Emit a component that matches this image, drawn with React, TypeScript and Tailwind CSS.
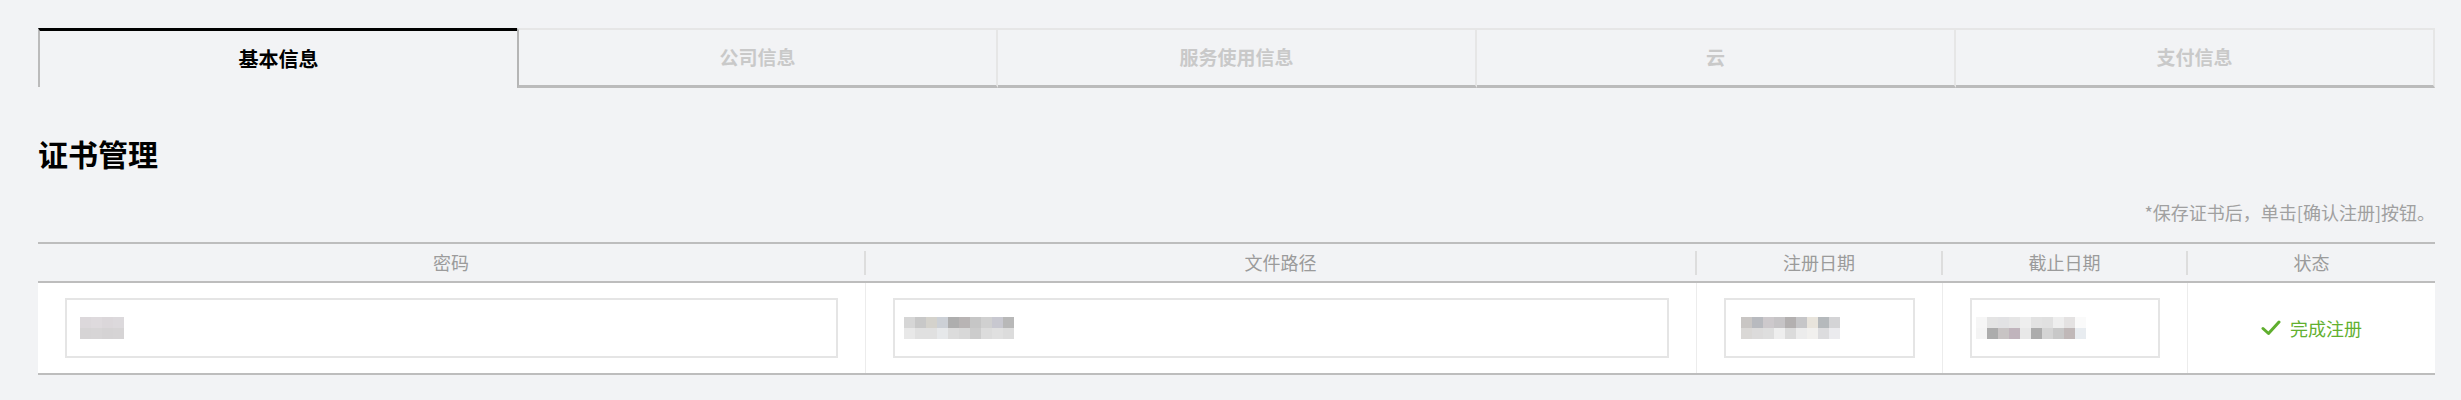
import React from 'react';

const font = "font-['Noto_Sans_CJK_SC','Noto_Sans',sans-serif]";

const tabs = ['基本信息', '公司信息', '服务使用信息', '云', '支付信息'];

const columns = [
  { title: '密码', width: 'w-[828px]' },
  { title: '文件路径', width: 'w-[831px]' },
  { title: '注册日期', width: 'w-[246px]' },
  { title: '截止日期', width: 'w-[245px]' },
  { title: '状态', width: 'w-[247px]' },
];

// blurred values, two rows of 11px cells
const pixPassword = [
  ['bg-[#dcd8db]', 'bg-[#dedadd]', 'bg-[#dbd7da]', 'bg-[#dcd9dc]'],
  ['bg-[#d6d4d5]', 'bg-[#d7d5d6]', 'bg-[#d5d3d4]', 'bg-[#d6d4d5]'],
];
const pixPath = [
  ['bg-[#d6d6d6]', 'bg-[#c8c8c8]', 'bg-[#d4d2cc]', 'bg-[#ccd0d6]', 'bg-[#aeaeae]', 'bg-[#b8b4b4]', 'bg-[#c6c6c6]', 'bg-[#d0d0d0]', 'bg-[#c8c8d0]', 'bg-[#b8b8b8]'],
  ['bg-[#e8e8e8]', 'bg-[#e0e0e0]', 'bg-[#e0e0e0]', 'bg-[#e6e8ea]', 'bg-[#dcdcdc]', 'bg-[#d8d8d8]', 'bg-[#cccccc]', 'bg-[#dcdcdc]', 'bg-[#e0e0e0]', 'bg-[#dcdcdc]'],
];
const pixRegDate = [
  ['bg-[#c9c6c4]', 'bg-[#b8babf]', 'bg-[#cdc9cc]', 'bg-[#c6c4c6]', 'bg-[#b3b0b0]', 'bg-[#c6c6c8]', 'bg-[#e8e4dc]', 'bg-[#b5b9bc]', 'bg-[#d4d4d6]'],
  ['bg-[#dad8d6]', 'bg-[#dcdbdb]', 'bg-[#dedede]', 'bg-[#eeeeee]', 'bg-[#dbdbdb]', 'bg-[#ececec]', 'bg-[#f1f0ee]', 'bg-[#dcdcde]', 'bg-[#ebebee]'],
];
const pixEndDate = [
  ['bg-[#f6f6f6]', 'bg-[#e4e4e4]', 'bg-[#e2e2e4]', 'bg-[#e6e6e6]', 'bg-[#eeeeee]', 'bg-[#e2e2e2]', 'bg-[#e0e0e0]', 'bg-[#eeeeee]', 'bg-[#e4e2e2]', 'bg-[#fafafa]'],
  ['bg-[#f4f4f4]', 'bg-[#acacac]', 'bg-[#c8c4c4]', 'bg-[#c0b4bc]', 'bg-[#e8e8e8]', 'bg-[#acacac]', 'bg-[#d4d4d4]', 'bg-[#c8c8c8]', 'bg-[#c0b8b8]', 'bg-[#e8ecf0]'],
];

function Mosaic({ rows }: { rows: string[][] }) {
  return (
    <div className="flex flex-col">
      {rows.map((row, i) => (
        <div key={i} className="flex">
          {row.map((c, j) => (
            <div key={j} className={`w-[11px] h-[11px] ${c}`} />
          ))}
        </div>
      ))}
    </div>
  );
}

function FieldBox({ rows, pad }: { rows: string[][]; pad: string }) {
  return (
    <div className={`h-[60px] w-full bg-white border-2 border-[#e5e5e5] flex items-center ${pad}`}>
      <Mosaic rows={rows} />
    </div>
  );
}

export default function App() {
  return (
    <div className={`w-full h-[400px] bg-[#f2f3f5] pl-[38px] pr-[26px] pt-[28px] ${font}`}>
      <div className="flex h-[60px]">
        {tabs.map((tab, i) =>
          i === 0 ? (
            <div
              key={tab}
              className="flex-1 h-[59px] border-t-[3px] border-t-black border-l-2 border-l-[#bbbbbb] flex items-center justify-center text-[20px] font-bold text-black"
            >
              {tab}
            </div>
          ) : (
            <div
              key={tab}
              className={`flex-1 h-[60px] border-t-2 border-t-[#e6e6e6] border-b-[3px] border-b-[#bbbbbb] border-r-2 border-r-[#e6e6e6] flex items-center justify-center text-[19px] font-bold text-[#c9c9c9] ${
                i === 1 ? 'border-l-2 border-l-[#b5b5b5]' : ''
              }`}
            >
              {tab}
            </div>
          )
        )}
      </div>

      <h2 className="mt-[50px] text-[30px] leading-none font-bold text-black">证书管理</h2>

      <div className="mt-[35px] flex justify-end text-[18px] leading-none text-[#a0a0a0]">
        *保存证书后，单击[确认注册]按钮。
      </div>

      <div className="mt-[21px] border-t-2 border-[#bdbdbd]">
        <div className="flex h-[39px] border-b-2 border-[#bdbdbd]">
          {columns.map((col, i) => (
            <div key={col.title} className={`${col.width} flex items-center`}>
              <div className="flex-1 text-center text-[18px] text-[#9b9b9b]">{col.title}</div>
              {i < columns.length - 1 && <div className="w-[2px] h-[24px] bg-[#dddddd]" />}
            </div>
          ))}
        </div>

        <div className="flex h-[92px] bg-white border-b-2 border-[#bdbdbd]">
          <div className="w-[828px] px-[27px] flex items-center border-r border-[#ececec]">
            <FieldBox rows={pixPassword} pad="pl-[13px]" />
          </div>
          <div className="w-[831px] px-[27px] flex items-center border-r border-[#ececec]">
            <FieldBox rows={pixPath} pad="pl-[9px]" />
          </div>
          <div className="w-[246px] px-[27px] flex items-center border-r border-[#ececec]">
            <FieldBox rows={pixRegDate} pad="pl-[15px]" />
          </div>
          <div className="w-[245px] px-[27px] flex items-center border-r border-[#ececec]">
            <FieldBox rows={pixEndDate} pad="pl-[4px]" />
          </div>
          <div className="w-[247px] flex items-center justify-center gap-[9px]">
            <svg width="20" height="16" viewBox="0 0 20 16" fill="none">
              <path d="M2 8.5 L7.5 13.5 L18 2" stroke="#5fae2e" strokeWidth="3" strokeLinecap="round" strokeLinejoin="round" />
            </svg>
            <span className="text-[18px] text-[#62b02f]">完成注册</span>
          </div>
        </div>
      </div>
    </div>
  );
}
